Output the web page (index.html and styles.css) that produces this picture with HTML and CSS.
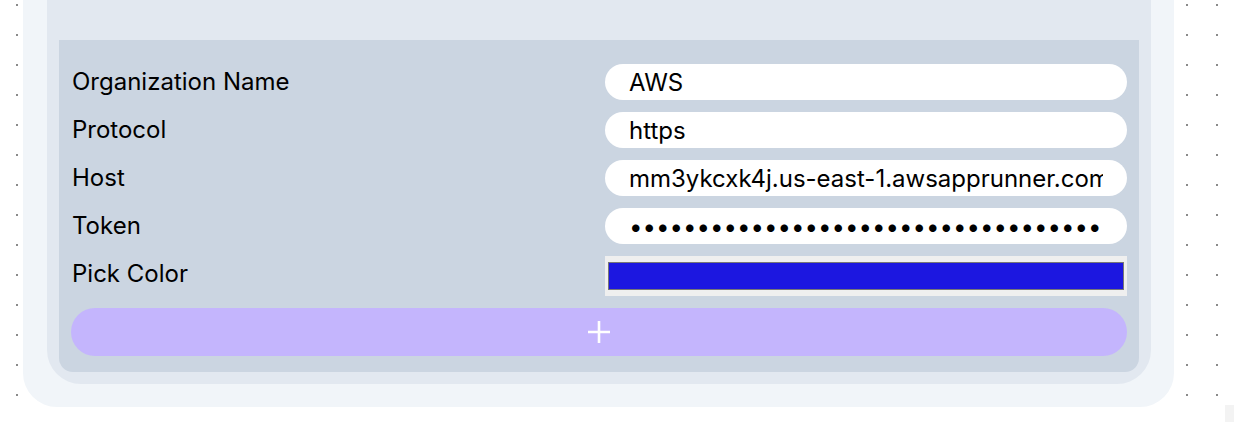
FILE: index.html
```html
<!DOCTYPE html>
<html lang="en">
<head>
<meta charset="utf-8">
<title>Organization settings</title>
<link rel="stylesheet" href="styles.css">
</head>
<body>
<div class="card">
  <div class="panel">
    <form class="form">
      <label class="label" for="org">Organization Name</label>
      <input class="field" id="org" type="text" value="AWS" readonly>
      <label class="label" for="proto">Protocol</label>
      <input class="field" id="proto" type="text" value="https" readonly>
      <label class="label" for="host">Host</label>
      <input class="field" id="host" type="text" value="mm3ykcxk4j.us-east-1.awsapprunner.com" readonly>
      <label class="label" for="token">Token</label>
      <input class="field" id="token" type="password" value="abcdefghijklmnopqrstuvwxyz012345678" readonly>
      <span class="label">Pick Color</span>
      <div class="color-input" role="button" aria-label="Pick Color"><div class="swatch"></div></div>
      <button class="add" type="button" aria-label="Add">
        <svg width="24" height="24" viewBox="0 0 24 24" fill="none" stroke="#ffffff" stroke-width="2.6" stroke-linecap="butt"><path d="M12 1v22M1 12h22"/></svg>
      </button>
    </form>
  </div>
</div>
<div class="scroll-corner"></div>
</body>
</html>
```
FILE: styles.css
```css
html, body {
  margin: 0;
  padding: 0;
}
body {
  height: 422px;
  overflow: hidden;
  background-color: #ffffff;
  background-image: radial-gradient(circle, #8a8a8a 0.9px, rgba(255,255,255,0) 1.3px);
  background-size: 30px 30px;
  background-position: 2px -10px;
  font-family: Inter, "Noto Sans", sans-serif;
  color: #000;
}
.card {
  margin: -60px 0 0 23px;
  width: 1151px;
  box-sizing: border-box;
  padding: 24px 23px 23px 24px;
  background: #f1f5f9;
  border-radius: 34px;
}
.panel {
  background: #e2e8f0;
  border-radius: 34px;
  padding: 76px 12px 12px 12px;
}
.form {
  margin: 0;
  background: #cbd5e1;
  border-radius: 0 0 14px 14px;
  padding: 24px 12px 16px 12px;
  display: grid;
  grid-template-columns: 1fr 1fr;
  column-gap: 12px;
  row-gap: 12px;
  align-items: start;
}
.label {
  font-size: 24px;
  line-height: 36px;
  padding-left: 1px;
}
.field {
  box-sizing: border-box;
  height: 36px;
  width: 100%;
  border: 0;
  border-radius: 18px;
  background: #ffffff;
  padding: 0 24px;
  font-family: Inter, "Noto Sans", sans-serif;
  font-size: 24px;
  color: #000;
  outline: none;
  margin: 0;
}
.color-input {
  height: 40px;
  box-sizing: border-box;
  background: #efefef;
  padding: 6px 3px;
}
.swatch {
  height: 100%;
  box-sizing: border-box;
  border: 1px solid #777777;
  background: #1c17e0;
}
.add {
  grid-column: 1 / -1;
  height: 48px;
  border: 0;
  border-radius: 24px;
  background: #c4b5fd;
  display: flex;
  align-items: center;
  justify-content: center;
  padding: 0;
  margin: 0;
}
.add svg {
  display: block;
  width: 24px;
  height: 24px;
}
.scroll-corner {
  position: fixed;
  right: 0;
  bottom: 0;
  width: 9px;
  height: 17px;
  background: #f3f3f3;
}
```
